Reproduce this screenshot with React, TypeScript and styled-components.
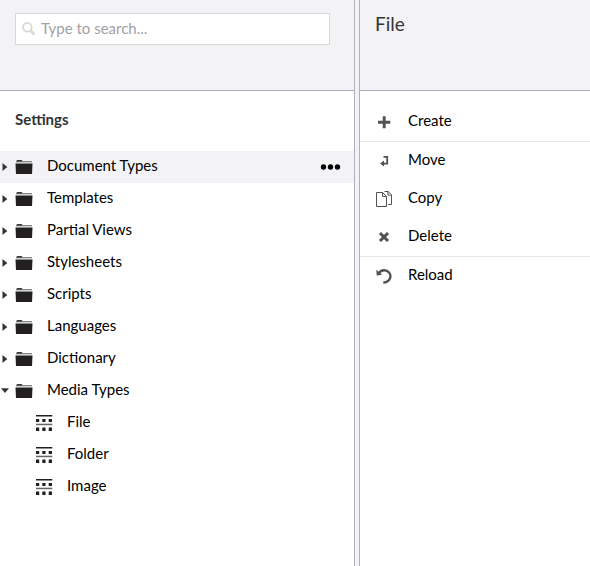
import React from "react";
import styled, { createGlobalStyle } from "styled-components";

const Global = createGlobalStyle`
  * { box-sizing: border-box; }
  html, body, #root { height: 100%; }
  body { margin: 0; background: #fff; font-family: Lato, sans-serif; font-size: 15px; color: #000; overflow: hidden; }
`;

const Layout = styled.div`
  display: flex;
  height: 100vh;
`;

const TreePanel = styled.section`
  width: 355px;
  flex: none;
  border-right: 1px solid #b0b0ba;
`;

const Divider = styled.div`
  width: 4px;
  flex: none;
  background: #f3f3f5;
`;

const ActionPanel = styled.section`
  flex: 1;
  border-left: 1px solid #b0b0ba;
`;

const PanelHeader = styled.header`
  height: 91px;
  padding: 13px 15px;
  background: #f3f3f5;
  border-bottom: 1px solid #b0b0ba;
`;

const SearchBox = styled.label`
  display: flex;
  align-items: center;
  gap: 6px;
  width: 315px;
  height: 32px;
  padding: 0 6px;
  background: #fff;
  border: 1px solid #d8d7d9;
`;

const SearchInput = styled.input`
  flex: 1;
  min-width: 0;
  padding: 0 0 3px;
  border: 0;
  outline: 0;
  background: transparent;
  font: 15px/20px Lato, sans-serif;
  &::placeholder { color: #a2a1a6; opacity: 1; }
`;

const DialogTitle = styled.h1`
  margin: -1px 0 0;
  font-size: 19px;
  line-height: 24px;
  font-weight: 400;
  color: #343434;
`;

const SectionTitle = styled.h2`
  margin: 18px 0 22px 15px;
  font-size: 15px;
  line-height: 20px;
  font-weight: 700;
  color: #343434;
`;

const List = styled.ul`
  margin: 0;
  padding: 0;
  list-style: none;
`;

const TreeRow = styled.li<{ $active?: boolean; $child?: boolean }>`
  display: flex;
  align-items: center;
  height: 32px;
  padding-left: ${(p) => (p.$child ? 20 : 0)}px;
  padding-right: 13px;
  background: ${(p) => (p.$active ? "#f3f3f5" : "transparent")};
`;

const Glyph = styled.svg`
  display: block;
  flex: none;
`;

const TreeLabel = styled.span`
  flex: 1;
  margin-left: 14px;
  line-height: 20px;
  padding-bottom: 4px;
`;

const MenuList = styled(List)`
  padding-top: 12px;
`;

const MenuItem = styled.li<{ $separated?: boolean }>`
  display: flex;
  align-items: center;
  gap: 16px;
  height: ${(p) => (p.$separated ? 39 : 38)}px;
  padding-left: 16px;
  border-top: ${(p) => (p.$separated ? "1px solid #e6e6e9" : "0")};
`;

const MenuLabel = styled.span`
  line-height: 20px;
  padding-bottom: 4px;
`;

function Caret({ open }: { open?: boolean }) {
  return (
    <Glyph width="15" height="16" viewBox="0 0 15 16">
      <path fill="#343434" d={open ? "M1 5.3h8L5 10z" : "M2.5 4v8L7.3 8z"} />
    </Glyph>
  );
}

function FolderIcon() {
  return (
    <Glyph width="18" height="16" viewBox="0 0 18 16">
      <path fill="#88888a" d="M1 2h16v1.4H1z" />
      <path fill="#343436" d="M1.6 2.5V1.6Q1.8 1 2.6 1h3.6q.8 0 1 .6l.3.9z" />
      <path fill="#211f20" d="M.5 4.4h17L17 15H1z" />
    </Glyph>
  );
}

function TypeIcon() {
  return (
    <Glyph width="18" height="16" viewBox="0 0 18 16" fill="#211f20">
      <path d="M1 0h16.3v1.4H1zM1 4h3.2v3H1zM7.3 4h3.2v3H7.3zM13.7 4h3.3v3h-3.3zM1 12.6h3.2V16H1zM7.3 12.6h3.2V16H7.3zM13.7 12.6h3.3V16h-3.3z" />
      <path fill="#656466" d="M1 8.7h16.3v1.5H1z" />
    </Glyph>
  );
}

function SearchIcon() {
  return (
    <Glyph width="13" height="14" viewBox="0 0 13 14" fill="none" stroke="#d8d7d9">
      <circle cx="5.3" cy="5.3" r="4.4" strokeWidth="1.7" />
      <path d="M8.7 8.8l3 3" strokeWidth="2.8" strokeLinecap="round" />
    </Glyph>
  );
}

function MoreIcon() {
  return (
    <Glyph width="21" height="6" viewBox="0 0 21 6" fill="#000">
      <circle cx="3.5" cy="3" r="2.7" />
      <circle cx="10.5" cy="3" r="2.7" />
      <circle cx="17.5" cy="3" r="2.7" />
    </Glyph>
  );
}

function MenuIcon({ name }: { name: string }) {
  return (
    <Glyph width="16" height="16" viewBox="0 0 16 16" fill="none" stroke="#525154">
      {name === "Create" && <path d="M8.2 2.2v12M2 8.2h12.3" strokeWidth="2.9" />}
      {name === "Move" && (
        <>
          <path d="M7.5 3.8h3.7v6.8H7" strokeWidth="1.8" />
          <path d="M8 7.5v6L4 10.6z" fill="#525154" stroke="none" />
        </>
      )}
      {name === "Copy" && (
        <>
          <path d="M.5 1.5h6.2l3.8 4v10H.5z" />
          <path d="M6.5 1.5v4h4M8.5.5h3.6l3.4 3.4v9.6h-3.3M11.9.5v3.6h3.6" />
        </>
      )}
      {name === "Delete" && <path d="M4 4l8 8M12 4l-8 8" strokeWidth="3.1" />}
      {name === "Reload" && (
        <>
          <path d="M2.8 5.3C5.2 1.6 10.3 1.2 13 4.4c3.3 4.2.6 9.6-5.7 10.2" strokeWidth="2.3" />
          <path d="M.4 1.8l.3 5.7 5.4-.8z" fill="#525154" stroke="none" />
        </>
      )}
    </Glyph>
  );
}

const folders = ["Document Types", "Templates", "Partial Views", "Stylesheets", "Scripts", "Languages", "Dictionary", "Media Types"];
const mediaTypes = ["File", "Folder", "Image"];
const actions = ["Create", "Move", "Copy", "Delete", "Reload"];

export default function App() {
  return (
    <>
      <Global />
      <Layout>
        <TreePanel>
          <PanelHeader>
            <SearchBox>
              <SearchIcon />
              <SearchInput placeholder="Type to search..." />
            </SearchBox>
          </PanelHeader>
          <SectionTitle>Settings</SectionTitle>
          <List>
            {folders.map((name, i) => (
              <TreeRow key={name} $active={i === 0}>
                <Caret open={name === "Media Types"} />
                <FolderIcon />
                <TreeLabel>{name}</TreeLabel>
                {i === 0 && <MoreIcon />}
              </TreeRow>
            ))}
            {mediaTypes.map((name) => (
              <TreeRow key={name} $child>
                <Glyph width="15" height="16" />
                <TypeIcon />
                <TreeLabel>{name}</TreeLabel>
              </TreeRow>
            ))}
          </List>
        </TreePanel>
        <Divider />
        <ActionPanel>
          <PanelHeader>
            <DialogTitle>File</DialogTitle>
          </PanelHeader>
          <MenuList>
            {actions.map((name) => (
              <MenuItem key={name} $separated={name === "Move" || name === "Reload"}>
                <MenuIcon name={name} />
                <MenuLabel>{name}</MenuLabel>
              </MenuItem>
            ))}
          </MenuList>
        </ActionPanel>
      </Layout>
    </>
  );
}
